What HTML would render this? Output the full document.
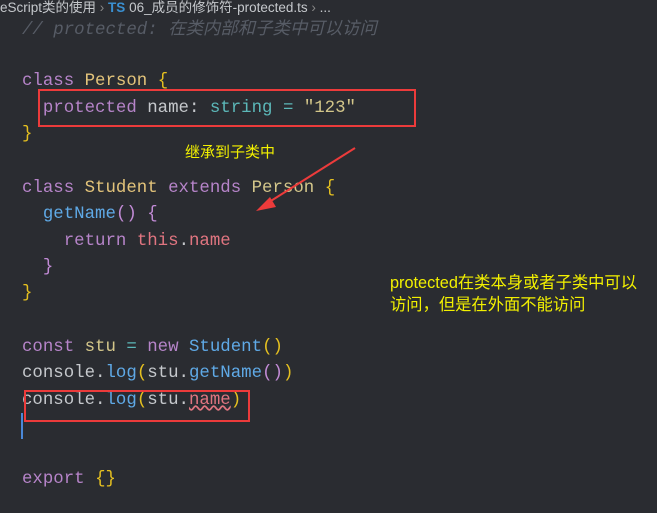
<!DOCTYPE html>
<html><head><meta charset="utf-8"><style>
body{margin:0;width:657px;height:513px;background:#2a2c31;overflow:hidden;position:relative;font-family:"Liberation Mono",monospace}
.l{position:absolute;left:22px;font-size:17.4px;white-space:pre;color:#c5c8cc;line-height:20px}
.k{color:#b684c9}.c{color:#e2c37a}.t{color:#5cb8b9}.s{color:#d3c68a}.f{color:#5fa9e6}.r{color:#e07580}.y{color:#e5c020}.p{color:#c28bd6}
.cm{color:#575c66;font-style:italic}
.box{position:absolute;border:2px solid #ec3b3b}
.ann{position:absolute;color:#f2f000;font-family:"Liberation Sans","Noto Sans CJK SC",sans-serif;font-size:15px;line-height:21px}
.bc{position:absolute;top:-4px;left:0;font-family:"Liberation Sans","Noto Sans CJK SC",sans-serif;font-size:13.5px;color:#c5c8cc;white-space:pre}
</style></head><body>
<div class="bc">eScript类的使用 <span style="color:#888">›</span> <b style="color:#3a8fd0">TS</b> 06_成员的修饰符-protected.ts <span style="color:#888">›</span> ...</div>
<div class="l cm" style="top:18px">// protected: <span style="font-family:'Noto Sans CJK SC',sans-serif">在类内部和子类中可以访问</span></div>
<div class="l" style="top:72px"><span class="k">class</span> <span class="c">Person</span> <span class="y">{</span></div>
<div class="l" style="top:99px">  <span class="k">protected</span> name: <span class="t">string</span> <span class="t">=</span> <span class="s">"123"</span></div>
<div class="l" style="top:125px"><span class="y">}</span></div>
<div class="l" style="top:179px"><span class="k">class</span> <span class="c">Student</span> <span class="k">extends</span> <span class="s">Person</span> <span class="y">{</span></div>
<div class="l" style="top:205px">  <span class="f">getName</span><span class="p">()</span> <span class="p">{</span></div>
<div class="l" style="top:232px">    <span class="k">return</span> <span class="r">this</span>.<span class="r">name</span></div>
<div class="l" style="top:258px">  <span class="p">}</span></div>
<div class="l" style="top:284px"><span class="y">}</span></div>
<div class="l" style="top:338px"><span class="k">const</span> <span class="s">stu</span> <span class="t">=</span> <span class="k">new</span> <span class="f">Student</span><span class="y">()</span></div>
<div class="l" style="top:364px">console.<span class="f">log</span><span class="y">(</span>stu.<span class="f">getName</span><span class="p">()</span><span class="y">)</span></div>
<div class="l" style="top:391px">console.<span class="f">log</span><span class="y">(</span>stu.<span class="r" style="text-decoration:underline wavy #e07580">name</span><span class="y">)</span></div>
<div style="position:absolute;left:21px;top:413px;width:2px;height:26px;background:#4a88d8"></div>
<div class="l" style="top:470px"><span class="k">export</span> <span class="y">{}</span></div>
<div class="box" style="left:38px;top:89px;width:374px;height:34px"></div>
<div class="box" style="left:24px;top:390px;width:222px;height:28px"></div>
<div class="ann" style="left:185px;top:142px">继承到子类中</div>
<div class="ann" style="left:390px;top:272px;font-size:16.3px;line-height:22px">protected在类本身或者子类中可以<br>访问，但是在外面不能访问</div>
<svg style="position:absolute;left:0;top:0" width="657" height="513"><line x1="355" y1="148" x2="266" y2="204" stroke="#ec3b3b" stroke-width="2"/><polygon points="256,211 270,197 276,207" fill="#ec3b3b"/></svg>
</body></html>
